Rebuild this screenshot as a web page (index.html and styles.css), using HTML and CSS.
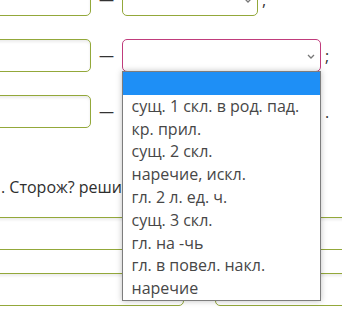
FILE: index.html
```html
<!DOCTYPE html>
<html lang="ru">
    <head>
        <meta charset="UTF-8" />
        <meta name="viewport" content="width=device-width, initial-scale=1.0" />
        <title>Упражнение</title>
        <link rel="stylesheet" href="styles.css">
    </head>
    <body>
        <div class="sheet">
            <!-- Word pairs -->
            <div class="pair-row">
                <div class="word-input"></div>
                <span class="dash">—</span>
                <div class="choice choice-short">
                    <svg class="chevron" width="8" height="5" viewBox="0 0 8 5"><path d="M1 1l3 3 3-3" fill="none" stroke="#777" stroke-width="1.3"/></svg>
                </div>
                <span class="punct">,</span>
            </div>

            <div class="pair-row">
                <div class="word-input"></div>
                <span class="dash">—</span>
                <div class="choice choice-open">
                    <svg class="chevron" width="8" height="5" viewBox="0 0 8 5"><path d="M1 1l3 3 3-3" fill="none" stroke="#777" stroke-width="1.3"/></svg>
                    <ul class="options">
                        <li class="selected"></li>
                        <li>сущ. 1 скл. в род. пад.</li>
                        <li>кр. прил.</li>
                        <li>сущ. 2 скл.</li>
                        <li>наречие, искл.</li>
                        <li>гл. 2 л. ед. ч.</li>
                        <li>сущ. 3 скл.</li>
                        <li>гл. на -чь</li>
                        <li>гл. в повел. накл.</li>
                        <li>наречие</li>
                    </ul>
                </div>
                <span class="punct">;</span>
            </div>

            <div class="pair-row">
                <div class="word-input"></div>
                <span class="dash">—</span>
                <div class="choice">
                    <svg class="chevron" width="8" height="5" viewBox="0 0 8 5"><path d="M1 1l3 3 3-3" fill="none" stroke="#777" stroke-width="1.3"/></svg>
                </div>
                <span class="punct">.</span>
            </div>

            <p class="task">. Сторож? решить, какую часть речи</p>

            <div class="pair-row">
                <div class="word-input word-long"></div>
                <span class="dash">—</span>
                <div class="word-input word-long"></div>
            </div>

            <div class="pair-row">
                <div class="word-input word-long"></div>
                <span class="dash">—</span>
                <div class="word-input word-long"></div>
            </div>
        </div>
    </body>
</html>
```

FILE: styles.css
```css
body {
    font-family: "Open Sans", Arial, sans-serif;
    margin: 0;
    width: 342px;
    height: 310px;
    overflow: hidden;
    background: #fff;
    color: #333;
}
.sheet {
    margin-top: -17px;
    margin-left: -59px;
    width: 600px;
}
.pair-row {
    display: flex;
    align-items: center;
    height: 33px;
    margin-bottom: 23px;
    font-size: 16px;
}
.word-input {
    flex-shrink: 0;
    box-sizing: border-box;
    width: 150px;
    height: 33px;
    border: 1px solid #93a83a;
    border-radius: 5px;
    box-shadow: inset 0 2px 3px rgba(0, 0, 0, 0.08);
    background: #fff;
}
.dash {
    flex-shrink: 0;
    display: flex;
    justify-content: center;
    width: 31px;
    font-size: 15px;
    color: #333;
    line-height: 1;
}
.choice {
    flex-shrink: 0;
    position: relative;
    box-sizing: border-box;
    width: 199px;
    height: 33px;
    border: 1px solid #93a83a;
    border-radius: 5px;
    background: #fff;
}
.choice-short {
    width: 136px;
}
.choice-open {
    border: 1.5px solid #c03c7c;
}
.chevron {
    position: absolute;
    right: 5px;
    top: 14px;
}
.punct {
    margin-left: 4px;
    color: #333;
}
.options {
    position: absolute;
    top: 31px;
    left: -1.5px;
    width: 199px;
    box-sizing: border-box;
    margin: 0;
    padding: 0;
    list-style: none;
    background: #fff;
    border: 1px solid #7d7d7d;
    box-shadow: 0 0 6px rgba(0, 0, 0, 0.25);
    z-index: 2;
}
.options li {
    height: 22.8px;
    line-height: 22.8px;
    padding-left: 9px;
    font-size: 16px;
    color: #474747;
    white-space: nowrap;
}
.options li.selected {
    background: #1e8ff6;
}
.task {
    margin: 47px 0 18px 60px;
    line-height: 24px;
    font-size: 16px;
    color: #2e2e2e;
    white-space: nowrap;
}
.word-long {
    width: 243px;
}
```
